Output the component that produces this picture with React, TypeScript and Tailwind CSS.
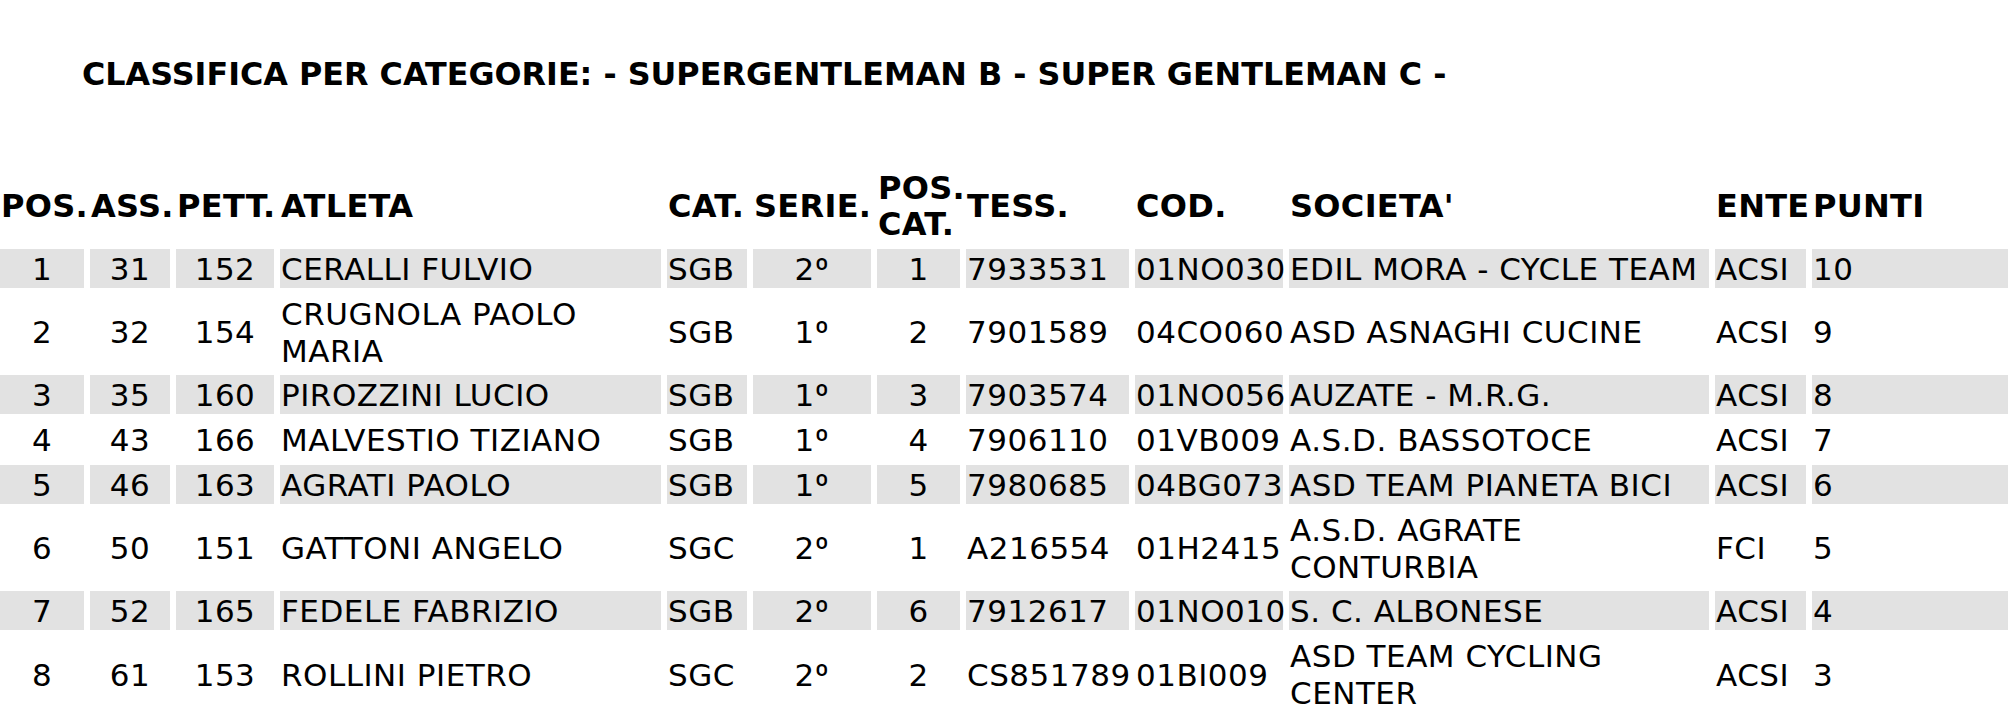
type Row = {
  pos: string;
  ass: string;
  pett: string;
  atleta: string;
  cat: string;
  serie: string;
  posCat: string;
  tess: string;
  cod: string;
  societa: string;
  ente: string;
  punti: string;
};

const rows: Row[] = [
  { pos: "1", ass: "31", pett: "152", atleta: "CERALLI FULVIO", cat: "SGB", serie: "2", posCat: "1", tess: "7933531", cod: "01NO030", societa: "EDIL MORA - CYCLE TEAM", ente: "ACSI", punti: "10" },
  { pos: "2", ass: "32", pett: "154", atleta: "CRUGNOLA PAOLO MARIA", cat: "SGB", serie: "1", posCat: "2", tess: "7901589", cod: "04CO060", societa: "ASD ASNAGHI CUCINE", ente: "ACSI", punti: "9" },
  { pos: "3", ass: "35", pett: "160", atleta: "PIROZZINI LUCIO", cat: "SGB", serie: "1", posCat: "3", tess: "7903574", cod: "01NO056", societa: "AUZATE - M.R.G.", ente: "ACSI", punti: "8" },
  { pos: "4", ass: "43", pett: "166", atleta: "MALVESTIO TIZIANO", cat: "SGB", serie: "1", posCat: "4", tess: "7906110", cod: "01VB009", societa: "A.S.D. BASSOTOCE", ente: "ACSI", punti: "7" },
  { pos: "5", ass: "46", pett: "163", atleta: "AGRATI PAOLO", cat: "SGB", serie: "1", posCat: "5", tess: "7980685", cod: "04BG073", societa: "ASD TEAM PIANETA BICI", ente: "ACSI", punti: "6" },
  { pos: "6", ass: "50", pett: "151", atleta: "GATTONI ANGELO", cat: "SGC", serie: "2", posCat: "1", tess: "A216554", cod: "01H2415", societa: "A.S.D. AGRATE CONTURBIA", ente: "FCI", punti: "5" },
  { pos: "7", ass: "52", pett: "165", atleta: "FEDELE FABRIZIO", cat: "SGB", serie: "2", posCat: "6", tess: "7912617", cod: "01NO010", societa: "S. C. ALBONESE", ente: "ACSI", punti: "4" },
  { pos: "8", ass: "61", pett: "153", atleta: "ROLLINI PIETRO", cat: "SGC", serie: "2", posCat: "2", tess: "CS851789", cod: "01BI009", societa: "ASD TEAM CYCLING CENTER", ente: "ACSI", punti: "3" },
];

function Th({ children }: { children: React.ReactNode }) {
  return (
    <th className="px-[1px] pt-[3px] pb-[1px] text-left align-middle text-[32px] font-bold leading-[36px] tracking-[0.3px]">
      {children}
    </th>
  );
}

export default function App() {
  return (
    <div className="h-[704px] w-[2008px] overflow-hidden bg-white text-black font-['DejaVu_Sans',sans-serif]">
      <h1 className="pl-[82px] pt-[55px] text-[31.8px] font-bold leading-[38px]">
        CLASSIFICA PER CATEGORIE: - SUPERGENTLEMAN B - SUPER GENTLEMAN C -
      </h1>

      <table className="-ml-[6px] mt-[68px] w-[2074px] table-fixed border-separate border-spacing-[6px] text-[31px] tracking-[0.5px]">
        <colgroup>
          <col className="w-[84px]" />
          <col className="w-[80px]" />
          <col className="w-[98px]" />
          <col className="w-[381px]" />
          <col className="w-[80px]" />
          <col className="w-[118px]" />
          <col className="w-[83px]" />
          <col className="w-[163px]" />
          <col className="w-[148px]" />
          <col className="w-[420px]" />
          <col className="w-[91px]" />
          <col className="w-[250px]" />
        </colgroup>
        <thead>
          <tr>
            <Th>POS.</Th>
            <Th>ASS.</Th>
            <Th>PETT.</Th>
            <Th>ATLETA</Th>
            <Th>CAT.</Th>
            <Th>SERIE.</Th>
            <Th>
              POS.
              <br />
              CAT.
            </Th>
            <Th>TESS.</Th>
            <Th>COD.</Th>
            <Th>SOCIETA'</Th>
            <Th>ENTE</Th>
            <Th>PUNTI</Th>
          </tr>
        </thead>
        <tbody>
          {rows.map((r, i) => {
            const bg = i % 2 === 0 ? "bg-[#e2e2e2]" : "";
            const td = `px-[1px] pt-[2px] align-middle leading-[36.8px] whitespace-normal ${bg}`;
            return (
              <tr key={r.pos}>
                <td className={`${td} text-center`}>{r.pos}</td>
                <td className={`${td} text-center`}>{r.ass}</td>
                <td className={`${td} text-center`}>{r.pett}</td>
                <td className={td}>{r.atleta}</td>
                <td className={td}>{r.cat}</td>
                <td className={`${td} text-center`}>
                  {r.serie}
                  <span className="font-['Roboto',sans-serif] leading-none">º</span>
                </td>
                <td className={`${td} text-center`}>{r.posCat}</td>
                <td className={td}>{r.tess}</td>
                <td className={td}>{r.cod}</td>
                <td className={td}>{r.societa}</td>
                <td className={td}>{r.ente}</td>
                <td className={td}>{r.punti}</td>
              </tr>
            );
          })}
        </tbody>
      </table>
    </div>
  );
}
